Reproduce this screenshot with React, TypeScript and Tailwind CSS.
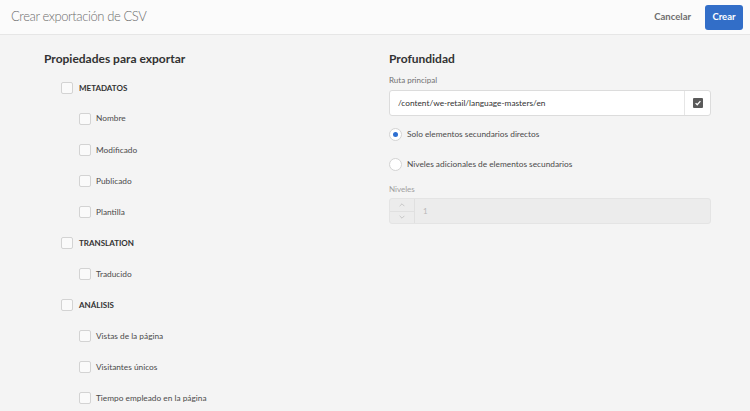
import { useState } from 'react'

type Item = { label: string; group?: boolean }

const items: Item[] = [
  { label: 'METADATOS', group: true },
  { label: 'Nombre' },
  { label: 'Modificado' },
  { label: 'Publicado' },
  { label: 'Plantilla' },
  { label: 'TRANSLATION', group: true },
  { label: 'Traducido' },
  { label: 'ANÁLISIS', group: true },
  { label: 'Vistas de la página' },
  { label: 'Visitantes únicos' },
  { label: 'Tiempo empleado en la página' },
]

function Checkbox({ label, group }: Item) {
  return (
    <label className={`flex h-[31.1px] items-center ${group ? 'pl-[17px]' : 'pl-[35px]'}`}>
      <span className="h-[12px] w-[12px] shrink-0 rounded-[2px] border border-[#d3d3d3] bg-[#fafafa]" />
      <span
        className={
          group
            ? 'ml-[6px] text-[8px] font-bold text-[#323232]'
            : 'ml-[5px] text-[8.3px] text-[#4b4b4b]'
        }
      >
        {label}
      </span>
    </label>
  )
}

function Radio({ checked, label }: { checked?: boolean; label: string }) {
  return (
    <div className="flex h-[30px] items-center">
      <span className="flex h-[13px] w-[13px] items-center justify-center rounded-full border border-[#d3d3d3] bg-white">
        {checked && <span className="h-[5px] w-[5px] rounded-full bg-[#2d6fd1]" />}
      </span>
      <span className="ml-[5px] text-[8.3px] text-[#4b4b4b]">{label}</span>
    </div>
  )
}

export default function App() {
  const [path, setPath] = useState('/content/we-retail/language-masters/en')

  return (
    <div className="h-[411px] w-[750px] overflow-hidden bg-[#f4f4f4] font-['Lato',sans-serif]">
      {/* Header */}
      <div className="flex h-[35px] items-center border-b border-[#e6e6e6] bg-[#fbfbfb] pl-[11px] pr-[7px]">
        <h1 className="flex-1 text-[13px] font-light tracking-[-0.4px] text-[#6e6e6e]">Crear exportación de CSV</h1>
        <button className="mr-[14px] text-[9.5px] font-bold text-[#6e6e6e]">Cancelar</button>
        <button className="h-[25px] w-[38px] rounded-[3px] bg-[#326ec8] text-[9.5px] font-bold text-white">
          Crear
        </button>
      </div>

      <div className="grid grid-cols-2 gap-[23px] pl-[44px] pr-[39px] pt-[15px]">
        {/* Left column */}
        <div>
          <h2 className="text-[12px] font-bold leading-[18px] text-[#323232]">Propiedades para exportar</h2>
          <div className="mt-[4px]">
            {items.map((it) => (
              <Checkbox key={it.label} {...it} />
            ))}
          </div>
        </div>

        {/* Right column */}
        <div>
          <h2 className="text-[12px] font-bold leading-[18px] text-[#323232]">Profundidad</h2>
          <div className="mt-[6px] text-[8px] leading-[12px] text-[#707070]">Ruta principal</div>
          <div className="mt-[4px] flex h-[26px] rounded-[3px] border border-[#dcdcdc] bg-white">
            <input
              value={path}
              onChange={(e) => setPath(e.target.value)}
              className="min-w-0 flex-1 bg-transparent pl-[8px] text-[8.3px] text-[#323232] outline-none"
            />
            <div className="flex w-[26px] items-center justify-center border-l border-[#e6e6e6]">
              <span className="flex h-[10px] w-[10px] items-center justify-center rounded-[1px] bg-[#5a5a5a]">
                <svg viewBox="0 0 10 10" className="h-[8px] w-[8px]" fill="none" stroke="white" strokeWidth={1.6}>
                  <path d="M2 5.2l2 2 4-4.5" />
                </svg>
              </span>
            </div>
          </div>

          <div className="mt-[3px]">
            <Radio checked label="Solo elementos secundarios directos" />
            <Radio label="Niveles adicionales de elementos secundarios" />
          </div>

          <div className="mt-[4px] text-[8px] leading-[12px] text-[#a0a0a0]">Niveles</div>
          <div className="mt-[3px] flex h-[26px] rounded-[3px] border border-[#e4e4e4] bg-[#ececec]">
            <div className="flex w-[25px] flex-col border-r border-[#e0e0e0]">
              <div className="flex flex-1 items-center justify-center border-b border-[#e0e0e0]">
                <svg viewBox="0 0 10 6" className="h-[4px] w-[6px]" fill="none" stroke="#b8b8b8" strokeWidth={1.2}>
                  <path d="M1 5l4-4 4 4" />
                </svg>
              </div>
              <div className="flex flex-1 items-center justify-center">
                <svg viewBox="0 0 10 6" className="h-[4px] w-[6px]" fill="none" stroke="#b8b8b8" strokeWidth={1.2}>
                  <path d="M1 1l4 4 4-4" />
                </svg>
              </div>
            </div>
            <div className="flex items-center pl-[8px] text-[8px] text-[#b8b8b8]">1</div>
          </div>
        </div>
      </div>
    </div>
  )
}
